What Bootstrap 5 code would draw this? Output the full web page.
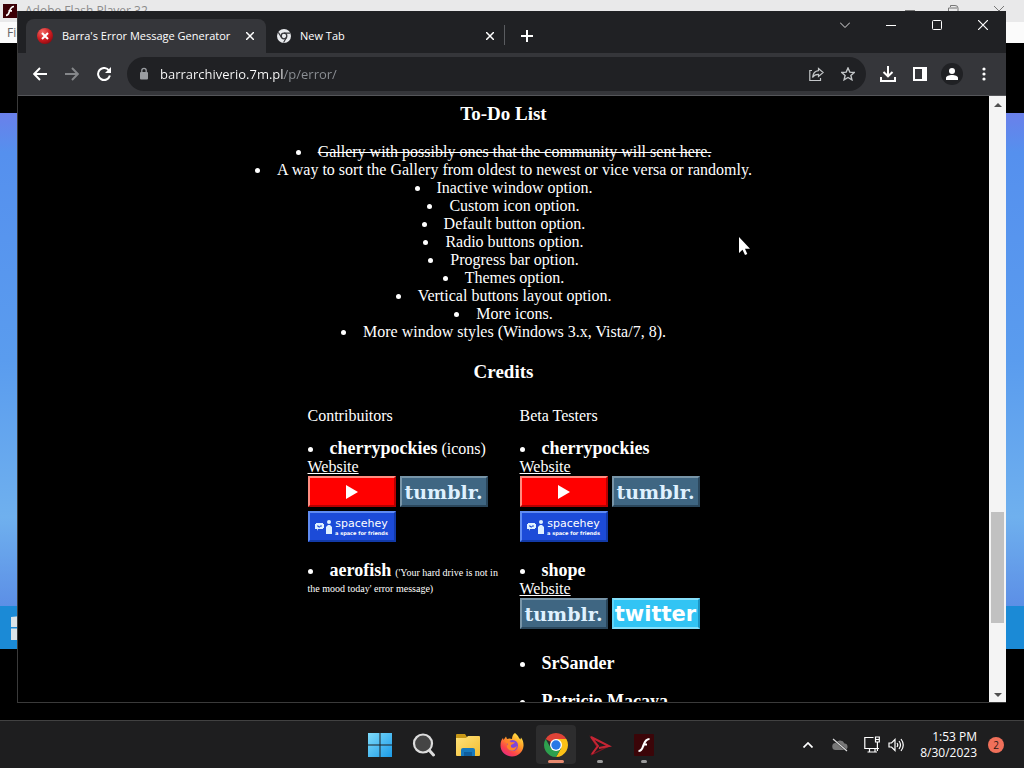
<!DOCTYPE html>
<html lang="en">
<head>
<meta charset="utf-8">
<meta name="viewport" content="width=device-width, initial-scale=1">
<title>Barra's Error Message Generator</title>
<link href="https://cdn.jsdelivr.net/npm/bootstrap@5.3.0/dist/css/bootstrap.min.css" rel="stylesheet">
<style>
  body { background: #000; font-family: "Open Sans", "Noto Sans", sans-serif; font-size: 12px; line-height: 16px; color: #fff; }
  button { background: none; border: 0; padding: 0; color: inherit; display: flex; align-items: center; justify-content: center; flex: none; }
  svg { display: block; flex: none; }

  /* window behind the browser */
  .back-title { height: 22px; background: #e9e9ea; color: #8b8b8b; padding-left: 3px; }
  .back-menu { height: 21px; background: #fbfbfb; color: #666; padding-left: 7px; }
  .letterbox { height: 70px; }
  .wallpaper { background: linear-gradient(180deg, #6a80ea 0%, #5590ee 8%, #5a9cee 50%, #6fb0ee 82%, #5c8fe6 100%); }
  .inner-taskbar { height: 43px; background: #1b8ad6; padding-left: 11px; }
  .below { height: 71px; }

  /* browser window */
  .browser { inset: 11px 18px 17px 18px; background: #000; }
  .browser::after { content: ""; position: absolute; inset: 0 0 0 -1px; border: 1px solid #3a3a3a; border-top: 0; border-right: 0; pointer-events: none; }
  .tab-strip { height: 42px; background: #202124; padding-left: 8px; }
  .browser-tab { width: 240px; height: 34px; padding: 0 8px 0 11px; font-size: 11px; }
  .browser-tab.current { background: #35363a; border-radius: 8px 8px 0 0; }
  .browser-tab > svg { margin-right: 9px; }
  .tab-divider { width: 1px; height: 20px; background: #5a5c60; margin-left: -2px; }
  .small-btn { width: 16px; height: 16px; }
  .new-tab { width: 28px; height: 34px; margin-left: 8px; }
  .win-btn { width: 46px; height: 28px; }
  .toolbar { height: 43px; background: #35363a; padding: 0 6px; border-bottom: 1px solid #55565a; }
  .tool-btn { width: 32px; height: 32px; }
  .omnibox { height: 34px; border-radius: 17px; background: #202124; margin: 0 6px 0 7px; padding: 0 2px 0 10px; color: #c4c7c9; }
  .address { min-width: 0; border: 0; outline: 0; font-size: 13px; margin-left: 9px; padding: 0; color: transparent;
    background: linear-gradient(90deg, #fff 124px, #8d9196 124px); -webkit-background-clip: text; background-clip: text; }
  .avatar { width: 22px; height: 22px; border-radius: 50%; background: #202124; margin: 0 5px; }

  /* page */
  .page { font-family: "Liberation Serif", serif; font-size: 16px; line-height: 18px; padding-top: 7px; }
  .page h3 { font-size: 19px; line-height: 21px; font-weight: 700; margin: 0 0 19px; }
  .page ul { list-style: disc inside; padding: 0; margin: 0 0 20px; }
  .page .section-title { margin-bottom: 25px; }
  .people { display: grid; grid-template-columns: 192px 180px; column-gap: 20px; justify-content: center; }
  .people p { margin: 0 0 13px; }
  .people li { margin-bottom: 18px; line-height: 14px; }
  .people b { font-size: 18px; line-height: 20px; }
  .people small { font-size: 10px; line-height: 14px; }
  .page a { color: #fff; }
  .site-link { line-height: 18px; }
  a.web-button { width: 88px; height: 31px; border: 2px solid; display: flex; align-items: center; justify-content: center; text-decoration: none; overflow: hidden; line-height: 1; }
  a.yt { background: #f00; border-color: #ff8c80 #b60000 #b60000 #ff8c80; }
  a.tb { background: #3f6682; border-color: #7895a8 #2a465b #2a465b #7895a8; font: 700 19px/20px "DejaVu Serif", serif; color: #dff1ff; }
  a.sh { background: #1c4bd8; border-color: #5f8bf2 #123aa8 #123aa8 #5f8bf2; font-family: "DejaVu Sans", sans-serif; gap: 2px; }
  a.tw { background: #32c4f4; border-color: #86e0fb #1b94c4 #86e0fb #5fd4f8; font: 700 21px/22px "DejaVu Sans", sans-serif; }
  .sh-name { font-size: 11px; line-height: 12px; }
  .sh-tag { font-size: 5px; line-height: 6px; font-weight: 700; white-space: nowrap; }

  .scrollbar-v { width: 17px; background: #f4f4f4; }
  .scrollbar-v button { height: 17px; }
  .thumb { margin: 0 2px; background: #c1c1c1; }
  .pointer { left: 73%; top: 226px; }

  /* taskbar */
  .taskbar { height: 48px; background: #1e1e1f; border-top: 1px solid #414141; display: grid; grid-template-columns: 1fr auto 1fr; }
  .app { width: 44px; height: 47px; position: relative; }
  .app.active-app::before { content: ""; position: absolute; inset: 4px 2px; border-radius: 4px; background: #2d2d2e; }
  .app svg { position: relative; }
  .app.running::after { content: ""; position: absolute; bottom: 5px; width: 6px; height: 3px; border-radius: 2px; background: #9b9b9b; }
  .app.active-app::after { width: 16px; background: #e88a70; }
  .clock { line-height: 16px; margin-right: 11px; }
  .notice { width: 16px; height: 16px; border-radius: 50%; background: #f0705a; color: #2a1714; font-size: 10px; margin-right: 20px; }
</style>
</head>
<body class="vh-100 d-flex flex-column overflow-hidden">

<main class="flex-grow-1 position-relative overflow-hidden d-flex flex-column">
  <div class="back-title d-flex align-items-center gap-2">
    <svg width="14" height="14" viewBox="0 0 14 14"><rect width="14" height="14" fill="#3c0006"/><path d="M11 2.500C7.500 2.500 7 6 6 8.500 5.400 10.500 4.500 11.300 3 11.300M5.500 6.800H9" fill="none" stroke="#fff" stroke-width="1.700"/></svg>
    <span class="flex-grow-1">Adobe Flash Player 32</span>
    <svg width="126" height="20" viewBox="0 0 126 20" fill="none" stroke="#777"><path d="M7 9.500H17M50.500 13V7H59M52.500 6V4.500H57Q60 4.500 60 7V12M96 5L101 10L106 5"/></svg>
  </div>
  <div class="back-menu d-flex align-items-center">File</div>
  <div class="letterbox"></div>
  <div class="wallpaper flex-grow-1"></div>
  <div class="inner-taskbar d-flex align-items-center">
    <svg width="24" height="24" viewBox="0 0 24 24" fill="#d9e3e8"><path d="M0 1L10 0V11H0ZM0 12.500H10V24H0Z"/></svg>
  </div>
  <div class="below"></div>

  <section class="browser position-absolute d-flex flex-column">
    <header class="tab-strip d-flex align-items-end flex-shrink-0">
      <div class="browser-tab current d-flex align-items-center">
        <svg width="16" height="16" viewBox="0 0 16 16"><defs><radialGradient id="red" cx=".35" cy=".25" r=".8"><stop offset="0" stop-color="#f26a65"/><stop offset=".6" stop-color="#cf1c20"/><stop offset="1" stop-color="#8d0910"/></radialGradient></defs><circle cx="8" cy="8" r="8" fill="url(#red)"/><path d="M5 5L11 11M11 5L5 11" stroke="#fff" stroke-width="2"/></svg>
        <span class="flex-grow-1 text-nowrap">Barra's Error Message Generator</span>
        <button class="small-btn" aria-label="Close tab"><svg width="8" height="8" viewBox="0 0 8 8"><path d="M0 0L8 8M8 0L0 8" stroke="#fff" stroke-width="1.500"/></svg></button>
      </div>
      <div class="browser-tab d-flex align-items-center">
        <svg width="14" height="14" viewBox="0 0 16 16" fill="none" stroke="#35363a"><circle cx="8" cy="8" r="8" fill="#e8eaed" stroke="none"/><circle cx="8" cy="8" r="3.200" stroke-width="1.500"/><path d="M8 4.700H15M5.200 9.700L1.500 3.800M10.800 9.700L7.500 15.500" stroke-width="1.300"/></svg>
        <span class="flex-grow-1">New Tab</span>
        <button class="small-btn" aria-label="Close tab"><svg width="8" height="8" viewBox="0 0 8 8"><path d="M0 0L8 8M8 0L0 8" stroke="#fff" stroke-width="1.500"/></svg></button>
      </div>
      <div class="tab-divider mb-2"></div>
      <button class="new-tab" aria-label="New tab"><svg width="12" height="12" viewBox="0 0 12 12"><path d="M6 0V12M0 6H12" stroke="#fff" stroke-width="2"/></svg></button>
      <div class="d-flex ms-auto align-self-start">
        <button class="win-btn" aria-label="Search tabs"><svg width="10" height="6" viewBox="0 0 10 6"><path d="M0 .5L5 5.500L10 .5" fill="none" stroke="#ddd"/></svg></button>
        <button class="win-btn" aria-label="Minimize"><svg width="10" height="2" viewBox="0 0 10 2"><path d="M0 1.500H10" stroke="#fff"/></svg></button>
        <button class="win-btn" aria-label="Maximize"><svg width="10" height="10" viewBox="0 0 10 10"><rect x=".5" y=".5" width="9" height="9" rx="1" fill="none" stroke="#fff"/></svg></button>
        <button class="win-btn" aria-label="Close"><svg width="10" height="10" viewBox="0 0 10 10"><path d="M0 0L10 10M10 0L0 10" stroke="#fff" stroke-width="1.200"/></svg></button>
      </div>
    </header>

    <nav class="toolbar d-flex align-items-center flex-shrink-0" aria-label="Browser">
      <button class="tool-btn" aria-label="Back"><svg width="14" height="14" viewBox="0 0 14 14"><path d="M14 7H1.500M7 1L1.200 7L7 13" fill="none" stroke="#fff" stroke-width="1.900"/></svg></button>
      <button class="tool-btn" aria-label="Forward"><svg width="14" height="14" viewBox="0 0 14 14"><path d="M0 7H12.500M7 1L12.800 7L7 13" fill="none" stroke="#85878a" stroke-width="1.900"/></svg></button>
      <button class="tool-btn" aria-label="Reload"><svg width="14" height="14" viewBox="0 0 14 14"><path d="M12 3.500A6 6 0 1 0 12.900 8.500" fill="none" stroke="#fff" stroke-width="2"/><path d="M14 0V6H8Z" fill="#fff"/></svg></button>
      <div class="omnibox flex-grow-1 d-flex align-items-center">
        <svg width="14" height="14" viewBox="0 0 14 14"><rect x="3" y="5" width="8" height="7.500" rx="1" fill="#9a9da1"/><path d="M4.800 5V3.500A2.200 2.200 0 0 1 9.200 3.500V5" fill="none" stroke="#9a9da1" stroke-width="1.300"/></svg>
        <input class="address flex-grow-1" type="text" aria-label="Address" value="barrarchiverio.7m.pl/p/error/">
        <button class="tool-btn" aria-label="Share"><svg width="15" height="15" viewBox="0 0 15 15" fill="none" stroke="currentColor" stroke-width="1.200"><path d="M3 3.500H.8V13.500H11.500V11M9.500 1.500L14.200 5.500L9.500 9.500V7.300C7 7.200 5 8 3.500 10.500 4 6.500 6 4 9.500 3.700Z"/></svg></button>
        <button class="tool-btn" aria-label="Bookmark"><svg width="14" height="14" viewBox="0 0 14 14"><path d="M7 1L8.800 5.100L13.200 5.500L9.900 8.400L10.900 12.800L7 10.500L3.100 12.800L4.100 8.400L.8 5.500L5.200 5.100Z" fill="none" stroke="currentColor" stroke-width="1.400"/></svg></button>
      </div>
      <button class="tool-btn" aria-label="Downloads"><svg width="16" height="16" viewBox="0 0 16 16" fill="none" stroke="#fff" stroke-width="2"><path d="M8 0V10M3.500 6L8 10.300L12.500 6M1 11V15H15V11"/></svg></button>
      <button class="tool-btn" aria-label="Side panel"><svg width="14" height="14" viewBox="0 0 14 14"><path d="M0 0H14V14H0ZM2 2V12H9V2Z" fill="#fff" fill-rule="evenodd"/></svg></button>
      <button class="avatar" aria-label="Profile"><svg width="12" height="12" viewBox="0 0 12 12" fill="#fff"><circle cx="6" cy="3" r="3"/><path d="M0 12V10C0 8 3 7 6 7S12 8 12 10V12Z"/></svg></button>
      <button class="tool-btn" aria-label="Menu"><svg width="4" height="14" viewBox="0 0 4 14" fill="#fff"><circle cx="2" cy="2" r="1.600"/><circle cx="2" cy="7" r="1.600"/><circle cx="2" cy="12" r="1.600"/></svg></button>
    </nav>

    <div class="d-flex flex-grow-1 overflow-hidden">
      <article class="page flex-grow-1 overflow-hidden">
        <div class="text-center">
          <h3>To-Do List</h3>
          <ul>
            <li><s>Gallery with possibly ones that the community will sent here.</s></li>
            <li>A way to sort the Gallery from oldest to newest or vice versa or randomly.</li>
            <li>Inactive window option.</li>
            <li>Custom icon option.</li>
            <li>Default button option.</li>
            <li>Radio buttons option.</li>
            <li>Progress bar option.</li>
            <li>Themes option.</li>
            <li>Vertical buttons layout option.</li>
            <li>More icons.</li>
            <li>More window styles (Windows 3.x, Vista/7, 8).</li>
          </ul>
          <h3 class="section-title">Credits</h3>
        </div>
        <div class="people">
          <div>
            <p>Contribuitors</p>
            <ul>
              <li><b>cherrypockies</b> (icons)
                <div class="site-link"><a href="#">Website</a></div>
                <div class="d-flex flex-wrap gap-1">
                  <a class="web-button yt" href="#" aria-label="YouTube"><svg width="12" height="14" viewBox="0 0 12 14"><path d="M0 0L12 7L0 14Z" fill="#fff"/></svg></a>
                  <a class="web-button tb" href="#">tumblr.</a>
                  <a class="web-button sh" href="#"><svg width="18" height="16" viewBox="0 0 18 16" fill="#dff1ff"><path d="M1 4H8V5H9V9H8V10H3L2 12V10H0V5H1Z"/><path d="M2 7H3.500V8H5V7H7" fill="none" stroke="#1c4bd8"/><circle cx="14" cy="3" r="2"/><path d="M11 8L13 6H15L17 8V15H11Z"/></svg><span class="d-flex flex-column align-items-center"><span class="sh-name">spacehey</span><span class="sh-tag">a space for friends</span></span></a>
                </div>
              </li>
              <li><b>aerofish</b> <small>('Your hard drive is not in the mood today' error message)</small></li>
            </ul>
          </div>
          <div>
            <p>Beta Testers</p>
            <ul>
              <li><b>cherrypockies</b>
                <div class="site-link"><a href="#">Website</a></div>
                <div class="d-flex flex-wrap gap-1">
                  <a class="web-button yt" href="#" aria-label="YouTube"><svg width="12" height="14" viewBox="0 0 12 14"><path d="M0 0L12 7L0 14Z" fill="#fff"/></svg></a>
                  <a class="web-button tb" href="#">tumblr.</a>
                  <a class="web-button sh" href="#"><svg width="18" height="16" viewBox="0 0 18 16" fill="#dff1ff"><path d="M1 4H8V5H9V9H8V10H3L2 12V10H0V5H1Z"/><path d="M2 7H3.500V8H5V7H7" fill="none" stroke="#1c4bd8"/><circle cx="14" cy="3" r="2"/><path d="M11 8L13 6H15L17 8V15H11Z"/></svg><span class="d-flex flex-column align-items-center"><span class="sh-name">spacehey</span><span class="sh-tag">a space for friends</span></span></a>
                </div>
              </li>
              <li><b>shope</b>
                <div class="site-link"><a href="#">Website</a></div>
                <div class="d-flex flex-wrap gap-1 mb-4">
                  <a class="web-button tb" href="#">tumblr.</a>
                  <a class="web-button tw" href="#">twitter</a>
                </div>
              </li>
              <li><b>SrSander</b></li>
              <li><b>Patricio Macaya</b></li>
            </ul>
          </div>
        </div>
      </article>
      <div class="scrollbar-v d-flex flex-column flex-shrink-0">
        <button aria-label="Scroll up"><svg width="8" height="4" viewBox="0 0 8 4"><path d="M0 4L4 0L8 4Z" fill="#505050"/></svg></button>
        <div style="flex: 399"></div>
        <div class="thumb" style="flex: 111"></div>
        <div style="flex: 63"></div>
        <button aria-label="Scroll down"><svg width="8" height="4" viewBox="0 0 8 4"><path d="M0 0L4 4L8 0Z" fill="#505050"/></svg></button>
      </div>
    </div>
    <svg class="pointer position-absolute" width="12" height="19" viewBox="0 0 12 19"><path d="M0 0V16L3.500 12.800L6 18L8.300 17L6 11.800H11Z" fill="#fff"/></svg>
  </section>
</main>

<footer class="taskbar flex-shrink-0 align-items-center">
  <div></div>
  <div class="d-flex">
    <button class="app" aria-label="Start"><svg width="24" height="24" viewBox="0 0 24 24"><defs><linearGradient id="win" x1="0" y1="0" x2="24" y2="24" gradientUnits="userSpaceOnUse"><stop stop-color="#7fdcfb"/><stop offset="1" stop-color="#1b9be8"/></linearGradient></defs><path d="M0 0H11.500V11.500H0ZM12.500 0H24V11.500H12.500ZM0 12.500H11.500V24H0ZM12.500 12.500H24V24H12.500Z" fill="url(#win)"/></svg></button>
    <button class="app" aria-label="Search"><svg width="24" height="24" viewBox="0 0 24 24"><path d="M17 17L21.500 22" stroke="#dcdcdc" stroke-width="3" stroke-linecap="round"/><circle cx="11" cy="10.500" r="9" fill="#454545" stroke="#dcdcdc" stroke-width="2.200"/></svg></button>
    <button class="app" aria-label="File Explorer"><svg width="24" height="24" viewBox="0 0 24 24"><defs><linearGradient id="fold" x2="1" y2="1"><stop stop-color="#ffe27a"/><stop offset="1" stop-color="#f3bd32"/></linearGradient></defs><path d="M0 2Q0 1 1 1H9L11 4V8H0Z" fill="#c79716"/><path d="M0 5H10L12 3H23Q24 3 24 4V22Q24 23 23 23H1Q0 23 0 22Z" fill="url(#fold)"/><path d="M5 23V17Q5 15 7 15H17Q19 15 19 17V23Z" fill="#1779bd"/><path d="M8 19H16V23H8Z" fill="#0f5d9c"/></svg></button>
    <button class="app" aria-label="Firefox"><svg width="24" height="24" viewBox="0 0 24 24"><defs><linearGradient id="fox" x1=".85" y1="0" x2=".2" y2="1"><stop stop-color="#fff04a"/><stop offset=".4" stop-color="#ff9a26"/><stop offset=".75" stop-color="#fb424b"/><stop offset="1" stop-color="#e2288a"/></linearGradient></defs><path d="M15 0C17 2 18.500 3 19 5L20.500 6.500 21 4.500C23 7 23.700 10 23.500 13 23 19 18 23.500 12 23.500S.5 19 .5 12.500C.5 9 1.500 6.500 3 5L3.500 7 6 3.500 7 6C9 5 11 5.500 12 6 12 3.500 13 1 15 0Z" fill="url(#fox)"/><circle cx="12.500" cy="12.500" r="5.500" fill="#7e45dc"/><path d="M4 8C7 7 9 7.500 11 9.200H15C14 11 12 11 11 12 10 15 14 16 17 13 16 18 11 19 8 16 6 14 7 12 8 11Z" fill="#ff8428"/></svg></button>
    <button class="app running active-app" aria-label="Chrome"><svg width="24" height="24" viewBox="0 0 24 24"><path d="M12 12L1.610 6A12 12 0 0 1 22.390 6Z" fill="#df4337"/><path d="M12 6H22.390A12 12 0 0 1 12 24L17.200 15Z" fill="#fbc116"/><path d="M1.610 6L6.800 15 12 18 17.200 15 12 24A12 12 0 0 1 1.610 6Z" fill="#2da04e"/><circle cx="12" cy="12" r="6" fill="#fff"/><circle cx="12" cy="12" r="4.700" fill="#2978e6"/></svg></button>
    <button class="app running" aria-label="Viewer"><svg width="24" height="24" viewBox="0 0 24 24" fill="none" stroke="#c42534" stroke-width="2"><path d="M3 4L21 13L3 22L9 14Z" stroke="#7d1622" stroke-width="1.300"/><path d="M3 4L21 13L11 15M3 4L10 13L4 21"/></svg></button>
    <button class="app running" aria-label="Flash Player"><svg width="20" height="22" viewBox="0 0 20 22"><rect width="20" height="22" rx="1" fill="#3b0508"/><path d="M15.500 5C11 5 10.500 9 9 12.500 8 15.500 7 17 4.500 17M9 10.500H13" fill="none" stroke="#fff" stroke-width="2.200"/></svg></button>
  </div>
  <div class="d-flex justify-content-end align-items-center">
    <button class="tool-btn" aria-label="Hidden icons"><svg width="10" height="6" viewBox="0 0 10 6"><path d="M.5 5.500L5 1L9.500 5.500" fill="none" stroke="#fff" stroke-width="1.700"/></svg></button>
    <button class="tool-btn" aria-label="OneDrive"><svg width="16" height="14" viewBox="0 0 16 14"><path d="M4 12A3.500 3.500 0 0 1 3.500 5 5 5 0 0 1 12.500 5.500 3.300 3.300 0 0 1 13 12Z" fill="#777"/><path d="M1 1L15 13" stroke="#1e1e1f" stroke-width="2"/><path d="M1 1L15 13" stroke="#ddd" stroke-width="1.200"/></svg></button>
    <button class="tool-btn" aria-label="Network"><svg width="16" height="17" viewBox="0 0 16 17" fill="none" stroke="#fff" stroke-width="1.200"><path d="M9.500 1.500H.8V12.500H15M5.500 12.500V16M11 12.500V16M3.500 16H13M11.500 1H15.300V6H11.500ZM13.400 6V15M11.500 3.500H15"/></svg></button>
    <button class="small-btn me-3" aria-label="Volume"><svg width="16" height="14" viewBox="0 0 16 14" fill="none" stroke="#fff" stroke-width="1.200"><path d="M1 5H3.500L7 1.500V12.500L3.500 9H1ZM9 5Q10.500 7 9 9M11 3Q14 7 11 11M13 1Q17.500 7 13 13"/></svg></button>
    <div class="clock text-end">1:53 PM<br>8/30/2023</div>
    <div class="notice d-flex align-items-center justify-content-center">2</div>
  </div>
</footer>

<script src="https://cdn.jsdelivr.net/npm/bootstrap@5.3.0/dist/js/bootstrap.bundle.min.js"></script>
</body>
</html>
